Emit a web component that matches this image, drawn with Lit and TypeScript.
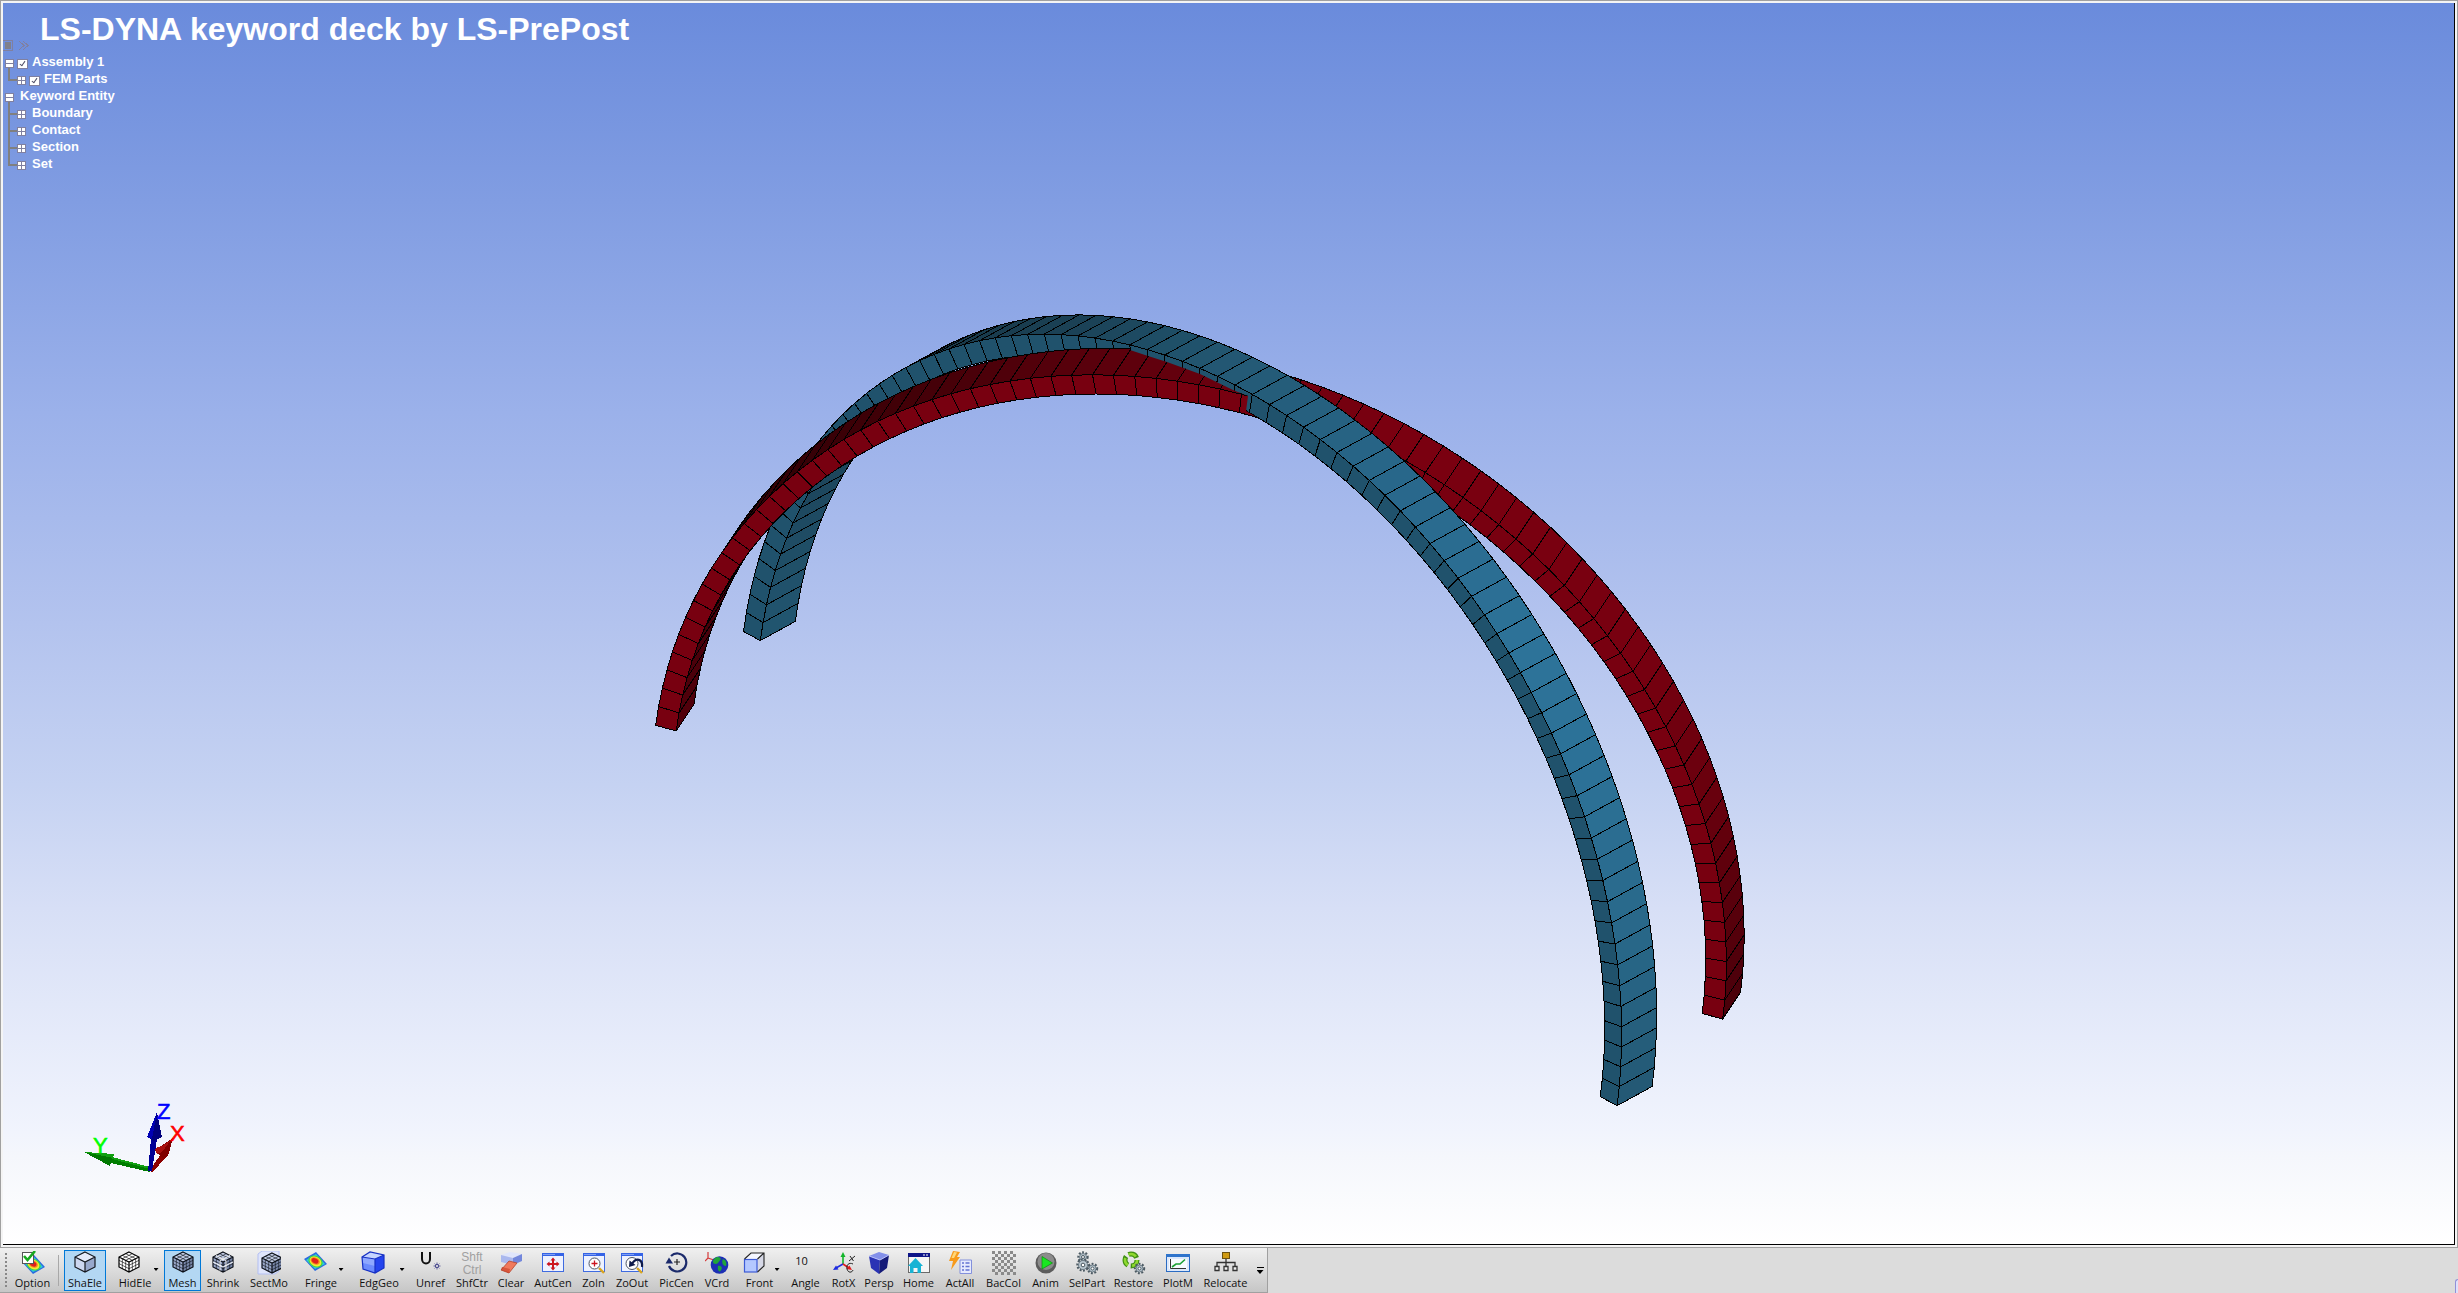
import { LitElement, html, svg, css, nothing, TemplateResult } from "lit";
import { customElement, state } from "lit/decorators.js";
import { classMap } from "lit/directives/class-map.js";
import { styleMap } from "lit/directives/style-map.js";

/* ---------- Arch geometry: half rings of shell elements, orthographic view ---------- */

type Vec = [number, number];
type Key = [number, string];

const STEPS = 79;
const INNER = 0.9615;

interface Arch {
  center: Vec;
  radius: Vec;
  rise: Vec;
  depth: Vec;
  front: string;
  outer: Key[];
  inner: Key[];
}

const BLUE: Arch = {
  center: [1180.3, 868.6],
  radius: [436.8, 237.1],
  rise: [63.3, -479],
  depth: [35, -19.2],
  front: "#20526c",
  outer: [[22, "#183a4b"], [29, "#1b4257"], [33, "#1e4d65"], [38, "#245a76"], [47, "#28678a"], [57, "#2d7399"], [63, "#2c7197"], [71, "#286788"], [79, "#235772"]],
  inner: [[0, "#21556f"], [5, "#1f4c64"], [12, "#1b4156"], [22, "#183a4c"]],
};

const RED: Arch = {
  center: [1189.2, 872.2],
  radius: [533.5, 146.9],
  rise: [62.8, -475.2],
  depth: [17.8, -26.7],
  front: "#780010",
  outer: [[14, "#330005"], [24, "#470008"], [32, "#5c000c"], [38, "#6a000e"], [45, "#7a0010"], [60, "#780010"], [68, "#68000d"], [79, "#48000a"]],
  inner: [[0, "#50000b"], [14, "#350006"]],
};

const channel = (c: string, i: number) => parseInt(c.slice(1 + 2 * i, 3 + 2 * i), 16);

function shade(keys: Key[], t: number): string {
  if (t <= keys[0][0]) return keys[0][1];
  for (let i = 1; i < keys.length; i++) {
    const [t1, c1] = keys[i];
    const [t0, c0] = keys[i - 1];
    if (t <= t1) {
      const f = (t - t0) / (t1 - t0);
      const mix = [0, 1, 2].map((k) => Math.round(channel(c0, k) * (1 - f) + channel(c1, k) * f));
      return `rgb(${mix.join(",")})`;
    }
  }
  return keys[keys.length - 1][1];
}

function point(a: Arch, step: number, scale: number, back: boolean): Vec {
  const th = (Math.PI * step) / STEPS;
  const c = -Math.cos(th) * scale;
  const s = Math.sin(th) * scale;
  const k = back ? 1 : 0;
  return [
    a.center[0] + a.radius[0] * c + a.rise[0] * s + a.depth[0] * k,
    a.center[1] + a.radius[1] * c + a.rise[1] * s + a.depth[1] * k,
  ];
}

function area(p: Vec[]): number {
  return p.reduce((sum, [x, y], i) => {
    const [nx, ny] = p[(i + 1) % p.length];
    return sum + x * ny - nx * y;
  }, 0);
}

function quad(p: Vec[], fill: string) {
  return svg`<polygon points=${p.map(([x, y]) => `${x.toFixed(1)},${y.toFixed(1)}`).join(" ")} fill=${fill}></polygon>`;
}

function archFaces(a: Arch) {
  const inner: TemplateResult<2>[] = [];
  const outer: TemplateResult<2>[] = [];
  const front: TemplateResult<2>[] = [];
  for (let i = 0; i < STEPS; i++) {
    const ring = (scale: number): Vec[] => [
      point(a, i, scale, false), point(a, i + 1, scale, false),
      point(a, i + 1, scale, true), point(a, i, scale, true),
    ];
    const out = ring(1);
    const inn = ring(INNER);
    if (area(inn) > 0) inner.push(quad(inn, shade(a.inner, i)));
    if (area(out) < 0) outer.push(quad(out, shade(a.outer, i)));
    front.push(quad([out[0], out[1], inn[1], inn[0]], a.front));
  }
  return [inner, outer, front];
}

/* ---------- Toolbar icons ---------- */

function cube(top: string, left: string, right: string, line: string, grid = false) {
  const lines: string[] = [];
  if (grid) {
    for (const f of [1 / 3, 2 / 3]) {
      const dx = 10 * f, dy = 5 * f, h = 10 * f;
      lines.push(
        `M${2 + dx} ${6 + dy}L${12 + dx} ${1 + dy}`,
        `M${22 - dx} ${6 + dy}L${12 - dx} ${1 + dy}`,
        `M${2 + dx} ${6 + dy}v10`,
        `M${22 - dx} ${6 + dy}v10`,
        `M2 ${6 + h}L12 ${11 + h}L22 ${6 + h}`
      );
    }
  }
  return svg`
    <path d="M12 1L22 6L12 11L2 6Z" fill=${top}></path>
    <path d="M2 6L12 11V21L2 16Z" fill=${left}></path>
    <path d="M22 6L12 11V21L22 16Z" fill=${right}></path>
    <path d=${lines.join("") || "M0 0"} fill="none" stroke=${line} stroke-width="0.6"></path>
    <path d="M12 1L22 6V16L12 21L2 16V6ZM2 6L12 11L22 6M12 11V21" fill="none" stroke=${line} stroke-width="1.2"></path>`;
}

const fringe = (y: number) => svg`
  <g transform="translate(0 ${y})">
    <path d="M1 8L13 1L24 13L12 20Z" fill="#2a6be0"></path>
    <path d="M3 9L13 3L22 13L12 18Z" fill="#2fd0d8"></path>
    <ellipse cx="12.5" cy="10.5" rx="7.5" ry="5.6" transform="rotate(28 12.5 10.5)" fill="#43d543"></ellipse>
    <ellipse cx="12.5" cy="10.5" rx="6.2" ry="4.6" transform="rotate(28 12.5 10.5)" fill="#f4e932"></ellipse>
    <ellipse cx="12.2" cy="10" rx="4.9" ry="3.5" transform="rotate(28 12.2 10)" fill="#f68a1e"></ellipse>
    <ellipse cx="12" cy="9.8" rx="3.6" ry="2.4" transform="rotate(28 12 9.8)" fill="#e0201c"></ellipse>
  </g>`;

const frame = svg`
  <rect x="1.5" y="2.5" width="21" height="18" fill="#eef2ff" stroke="#3f6be0"></rect>
  <rect x="1" y="2" width="22" height="3" fill="#3563e6"></rect>
  <rect x="2" y="3" width="12" height="1" fill="#7f9ff4"></rect>`;

const handle = svg`<path d="M17 17L22 22" stroke="#d9a520" stroke-width="2.4"></path>`;

function gear(cx: number, cy: number, r: number) {
  return svg`
    <circle cx=${cx} cy=${cy} r=${r} fill="none" stroke="#4c5a63" stroke-width="2.4" stroke-dasharray="1.8 1.5"></circle>
    <circle cx=${cx} cy=${cy} r=${r - 1} fill="#b9c7cf" stroke="#6d7c86"></circle>
    <circle cx=${cx} cy=${cy} r=${r / 3} fill="#ffffff" stroke="#4c5a63"></circle>`;
}

const ICONS: Record<string, TemplateResult<2>> = {
  Option: svg`${fringe(3)}
    <rect x="1.5" y="1.5" width="11" height="11" fill="#ffffff" stroke="#555"></rect>
    <path d="M3 5L6.500 9L14 0" fill="none" stroke="#17a81f" stroke-width="2.6"></path>`,
  ShaEle: cube("#e4eafa", "#cdd7f0", "#98a8cc", "#15181f"),
  HidEle: cube("#ffffff", "#ffffff", "#ffffff", "#000000", true),
  Mesh: cube("#c3cde6", "#9aa8ca", "#7886a8", "#0c1018", true),
  Shrink: svg`${cube("#c3cde6", "#9aa8ca", "#7886a8", "#0c1018", true)}
    <path d="M5 4.500L15 9.500V19.500M19 4.500L9 9.500V19.500M2 11L12 16L22 11" fill="none" stroke="#ffffff" stroke-width="1"></path>`,
  SectMo: svg`
    <path d="M1 3L5 0H22V20L18 23H1Z" fill="#dfe5fb" stroke="#b3bff3"></path>
    <g transform="translate(3 1)">${cube("#c3cde6", "#9aa8ca", "#7886a8", "#0c1018", true)}</g>`,
  Fringe: fringe(0),
  EdgGeo: svg`
    <path d="M1 6L9 1L23 4L14 8Z" fill="#c5d4ff"></path>
    <path d="M1 6L14 8V22L2 18Z" fill="#8ea8ff"></path>
    <path d="M14 8L23 4V17L14 22Z" fill="#2444ee"></path>
    <path d="M2 12L14 15V22L2 18Z" fill="#6b8bfd"></path>
    <path d="M1 6L9 1L23 4V17L14 22L2 18ZM1 6L14 8L23 4M14 8V22" fill="none" stroke="#1630c4" stroke-width="1.2"></path>`,
  Unref: svg`
    <path d="M3 1V8C3 14 11 14 11 8V1" fill="none" stroke="#111" stroke-width="2"></path>
    <g stroke="#44448c" fill="none"><circle cx="18" cy="15" r="1.600"></circle><path d="M18 11.500V13M18 17V18.500M14.500 15H16M20 15H21.500M15.600 12.600L16.600 13.600M19.400 16.400L20.400 17.400M20.400 12.600L19.400 13.600M16.600 16.400L15.600 17.400" stroke-width="0.8"></path></g>`,
  Clear: svg`
    <path d="M2 4L11 1L23 3L14 7Z" fill="#dfe5fb"></path>
    <path d="M2 4L14 7V14L2 11Z" fill="#aab8ee"></path>
    <path d="M14 7L23 3V10L14 14Z" fill="#7387dc"></path>
    <path d="M10 10L18 12L10 22L2 19Z" fill="#f0795c"></path>
    <path d="M2 19L10 22L11 18L3 16Z" fill="#d9553a"></path>
    <path d="M10 10L18 12L10 22L2 19Z" fill="none" stroke="#b4432d" stroke-width="0.8"></path>`,
  AutCen: svg`${frame}
    <path d="M12 8V18M7 13H17" stroke="#cc1420" stroke-width="2"></path>
    <path d="M12 6.500L9.500 9.500H14.500ZM12 19.500L9.500 16.500H14.500ZM5.500 13L8.500 10.500V15.500ZM18.500 13L15.500 10.500V15.500Z" fill="#cc1420"></path>`,
  ZoIn: svg`${frame}${handle}
    <circle cx="12.500" cy="12.500" r="5.500" fill="#ffffff" stroke="#4d5564"></circle>
    <path d="M12.500 9.500V15.500M9.500 12.500H15.500" stroke="#cc1420" stroke-width="1.300"></path>`,
  ZoOut: svg`${frame}${handle}
    <circle cx="12" cy="12.500" r="6" fill="#ffffff" stroke="#4d5564"></circle>
    <path d="M22 16C23 8 16 6 12 13" fill="none" stroke="#0e1a4a" stroke-width="2.200"></path>
    <path d="M9 16L9.500 9.500L15.500 14Z" fill="#0e1a4a"></path>`,
  PicCen: svg`
    <path d="M4 15A9 9 0 1 0 6 5" fill="none" stroke="#1b2a6b" stroke-width="2.200"></path>
    <path d="M0.500 12.500H8L4 6.500Z" fill="#1b2a6b"></path>
    <path d="M12 8V14M9 11H15" stroke="#222" stroke-width="1.200"></path>`,
  VCrd: svg`
    <path d="M3 1V7L9 9M3 7L0 10" fill="none" stroke="#d43a3a" stroke-width="1.200"></path>
    <circle cx="14.500" cy="14" r="8.800" fill="#1c2fb4"></circle>
    <path d="M9 8C12 5 15 6 16 8C14 10 13 13 11 13C8 13 7 11 9 8ZM18 8C21 9 22 12 21 15C18 15 16 11 18 8ZM13 15C16 14 18 17 16 19C15 22 12 20 13 15Z" fill="#1fa53a"></path>`,
  Front: svg`
    <path d="M2 8L9 2H22L15 8Z" fill="#f4f6ff"></path>
    <path d="M15 8L22 2V15L15 21Z" fill="#d6d8e6"></path>
    <rect x="2" y="8" width="13" height="13" fill="#b4c8ff"></rect>
    <rect x="2.500" y="8.500" width="12.500" height="12.500" fill="none" stroke="#3c5bd6" stroke-width="1.200"></rect>
    <path d="M2.500 8L9 2H22V15L15.500 21M15.500 8L22 2" fill="none" stroke="#222" stroke-width="1.100"></path>`,
  RotX: svg`
    <path d="M11 13V4" stroke="#12b52a" stroke-width="1.600"></path><path d="M8.500 6L11 1L13.500 6Z" fill="#12b52a"></path>
    <path d="M11 13L4 17" stroke="#1d2be0" stroke-width="1.600"></path><path d="M1 19L6.500 18.500L4 14.500Z" fill="#1d2be0"></path>
    <path d="M11 13L17 17" stroke="#e01c1c" stroke-width="1.600"></path><path d="M20 19L14.500 18L17.500 14.500Z" fill="#e01c1c"></path>
    <path d="M18 5L21.500 10M23 5L17 10" stroke="#222" stroke-width="1"></path>
    <path d="M21 13C17 11 14 14 15 18C16 22 20 22 21 19" fill="none" stroke="#222" stroke-width="1"></path>`,
  Persp: svg`
    <path d="M2 5L12 1L22 4L13 9Z" fill="#8390ea"></path>
    <path d="M2 5L13 9L12 23L4 17Z" fill="#2a33b4"></path>
    <path d="M13 9L22 4L20 17L12 23Z" fill="#141a78"></path>
    <path d="M2 5L13 9L22 4" fill="none" stroke="#c3caff" stroke-width="0.900"></path>`,
  Home: svg`
    <rect x="1.500" y="2.500" width="21" height="19" fill="#f5f5f5" stroke="#6a6a6a"></rect>
    <rect x="1" y="2" width="22" height="4" fill="#0c1488"></rect>
    <path d="M16 4H18M19 4H21" stroke="#ffffff" stroke-width="1"></path>
    <path d="M1 15L8.500 7L16 15H14V22H10.500V17H6.500V22H3V15Z" fill="#16b3d4"></path>`,
  ActAll: svg`
    <path d="M5 0L12 1L9 6H12L3 19L5 10H1Z" fill="#f79a1c"></path><path d="M6 1L9 1.500L6 7H3.500Z" fill="#ffd87a"></path>
    <path d="M12 9H23.500V22.500H12Z" fill="#e6eafd" stroke="#8390dc"></path>
    <path d="M14 12H16M14 15.500H16M14 19H16M17.500 12H21.500M17.500 15.500H21.500M17.500 19H21.500" stroke="#6473d2" stroke-width="1.400"></path>`,
  BacCol: svg`
    ${Array.from({ length: 64 }, (_, i) => [i % 8, Math.floor(i / 8)])
      .filter(([x, y]) => (x + y) % 2 === 0)
      .map(([x, y]) => svg`<rect x=${x * 3} y=${y * 3} width="3" height="3" fill="#8a8a8a"></rect>`)}`,
  Anim: svg`
    <circle cx="12" cy="12" r="10.500" fill="#5c5c5c"></circle>
    <circle cx="12" cy="10.500" r="8.500" fill="#8b8b8b"></circle>
    <path d="M8 5.500L18.500 12L8 18Z" fill="#19e620" stroke="#0a8c10" stroke-width="0.700"></path>`,
  SelPart: svg`${gear(8, 6, 4.5)}${gear(8, 14, 5.5)}${gear(17.5, 17.5, 4.5)}`,
  Restore: svg`
    <circle cx="9" cy="9" r="6" fill="none" stroke="#3f8f14" stroke-width="5" stroke-dasharray="9.500 3"></circle>
    <circle cx="9" cy="9" r="6" fill="none" stroke="#8fd82f" stroke-width="2.600" stroke-dasharray="8 4.500"></circle>
    ${gear(17.5, 17.5, 4.5)}`,
  PlotM: svg`
    <rect x="0.500" y="3.500" width="23" height="17" fill="#dce8fb" stroke="#2a6bc2"></rect>
    <rect x="0" y="3" width="24" height="3" fill="#2f74cc"></rect>
    <rect x="3" y="8" width="18" height="10" fill="#f7faff"></rect>
    <path d="M4.500 8V17.500H20" fill="none" stroke="#333" stroke-width="1"></path>
    <path d="M6 16L10 13H14L19 8.500" fill="none" stroke="#1aa033" stroke-width="1.600"></path>`,
  Relocate: svg`
    <rect x="8.500" y="1.500" width="7" height="6" fill="#cf9a12" stroke="#6a5010"></rect>
    <path d="M12 8V15M3 15V11.500H21V15" fill="none" stroke="#333" stroke-width="1.300"></path>
    <path d="M1 15.500H5V19.500H1ZM10 15.500H14V19.500H10ZM19 15.500H23V19.500H19Z" fill="#f0f0f0" stroke="#333" stroke-width="1.300"></path>`,
};

interface Tool { name: string; width: number; menu?: boolean; text?: string[] }

const TOOLS: Tool[] = [
  { name: "ShaEle", width: 42 }, { name: "HidEle", width: 56, menu: true }, { name: "Mesh", width: 37 },
  { name: "Shrink", width: 42 }, { name: "SectMo", width: 48 }, { name: "Fringe", width: 54, menu: true },
  { name: "EdgGeo", width: 60, menu: true }, { name: "Unref", width: 41 },
  { name: "ShfCtr", width: 40, text: ["Shft", "Ctrl"] }, { name: "Clear", width: 36 },
  { name: "AutCen", width: 46 }, { name: "ZoIn", width: 33 }, { name: "ZoOut", width: 42 },
  { name: "PicCen", width: 45 }, { name: "VCrd", width: 34 }, { name: "Front", width: 49, menu: true },
  { name: "Angle", width: 41, text: ["10"] }, { name: "RotX", width: 33 }, { name: "Persp", width: 36 },
  { name: "Home", width: 41 }, { name: "ActAll", width: 40 }, { name: "BacCol", width: 45 },
  { name: "Anim", width: 37 }, { name: "SelPart", width: 44 }, { name: "Restore", width: 47 },
  { name: "PlotM", width: 40 }, { name: "Relocate", width: 53 },
];

@customElement("model-view")
class ModelView extends LitElement {
  static styles = css`
    :host { display: block; }
    .scene { display: block; width: 100%; height: 100%; }
    .mesh { stroke: #000; stroke-width: 1; stroke-linejoin: round; shape-rendering: crispEdges; }
  `;

  render() {
    return html`
      <svg class="scene" viewBox="3 3 2451 1241" role="img" aria-label="Two crossing arches">
        <clipPath id="near">
          <path d="M0 0H1130V350L1148 356L1167 362L1200 374L1233 390L1248 396L1246 411L1261 420V1293H0Z"></path>
        </clipPath>
        <g class="mesh">${archFaces(RED)}</g>
        <g class="mesh">${archFaces(BLUE)}</g>
        <g class="mesh" clip-path="url(#near)">${archFaces(RED)}</g>
      </svg>`;
  }
}

@customElement("axis-triad")
class AxisTriad extends LitElement {
  static styles = css`
    :host { display: block; }
    .triad { display: block; width: 100%; height: 100%; shape-rendering: crispEdges; }
    .letter { font: 22px "Liberation Sans", Arial, sans-serif; stroke-width: 0.6; }
  `;

  render() {
    return html`
      <svg class="triad" viewBox="80 1095 112 82" role="img" aria-label="Axes">
        <path d="M149 1171L161 1154L166 1157L153 1172Z" fill="#8c0000"></path>
        <path d="M155 1150L173 1138L168 1156L162 1158Z" fill="#800000"></path>
        <path d="M155 1148L162 1146L171 1140L162 1152L157 1154Z" fill="#a81010"></path>
        <path d="M150 1167V1172L111 1163L112 1157Z" fill="#007d00"></path>
        <path d="M150 1167V1169L112 1159V1157Z" fill="#12a012"></path>
        <path d="M84 1152L114 1154L112 1160L110 1166Z" fill="#007800"></path>
        <path d="M84 1152L114 1154L113 1158Z" fill="#0fa00f"></path>
        <path d="M148 1171L151 1139H157L152 1171Z" fill="#000096"></path>
        <path d="M157 1112L147 1137L154 1141L162 1137Z" fill="#00007d"></path>
        <path d="M157 1112L147 1137L152 1139Z" fill="#0000b4"></path>
        <text class="letter" x="157" y="1119" fill="#0000ff" stroke="#0000ff">Z</text>
        <text class="letter" x="170" y="1141" fill="#ff0000" stroke="#ff0000">X</text>
        <text class="letter" x="93" y="1153" fill="#00ff00" stroke="#00ff00">Y</text>
      </svg>`;
  }
}

interface Node { label: string; child?: boolean; open?: boolean; check?: boolean; last?: boolean }

const NODES: Node[] = [
  { label: "Assembly 1", open: true, check: true },
  { label: "FEM Parts", child: true, check: true, last: true },
  { label: "Keyword Entity", open: true },
  { label: "Boundary", child: true },
  { label: "Contact", child: true },
  { label: "Section", child: true },
  { label: "Set", child: true, last: true },
];

@customElement("entity-tree")
class EntityTree extends LitElement {
  static styles = css`
    :host { display: block; color: #fff; font: bold 13px/17px "Liberation Sans", Arial, sans-serif; }
    button { appearance: none; border: 0; padding: 0; margin: 0; background: none; font: inherit; color: inherit; }
    svg { display: block; shape-rendering: crispEdges; }
    .head { display: flex; align-items: center; gap: 6px; height: 15px; }
    .rows { list-style: none; margin: 0; padding: 0 0 0 2px; }
    .row { display: flex; align-items: center; height: 17px; }
    .toggle, .guide { width: 12px; height: 17px; flex: none; }
    .entry { display: flex; align-items: center; gap: 4px; white-space: nowrap; }
    .plain { padding-left: 3px; white-space: nowrap; }
    .tick { appearance: none; position: relative; box-sizing: border-box; width: 11px; height: 10px; margin: 4px 0 0; background: #fff; border: 1px solid #8080a0; }
    .tick:checked::after { content: ""; position: absolute; left: 3px; top: 0; width: 2px; height: 5px; border: solid #505068; border-width: 0 1px 1px 0; transform: rotate(35deg); }
  `;

  private toggle(n: Node) {
    return html`
      <button class="toggle" aria-label=${(n.open ? "Collapse " : "Expand ") + n.label}>
        <svg width="12" height="17" viewBox="0 0 12 17">
          ${n.open ? svg`<rect x="3" y="15" width="2" height="2" fill="#808080"></rect>` : nothing}
          <rect x="0" y="6" width="9" height="9" fill="#8080a0"></rect>
          <rect x="1" y="7" width="7" height="7" fill="#ffffff"></rect>
          <rect x="0" y="10" width="9" height="1" fill="#8080a0"></rect>
          ${n.open ? nothing : svg`<rect x="4" y="6" width="1" height="9" fill="#8080a0"></rect>`}
        </svg>
      </button>`;
  }

  render() {
    return html`
      <div class="head">
        <button aria-label="Dock tree">
          <svg width="10" height="11" viewBox="0 0 10 11">
            <path d="M0 0.500H9.500V10.500H0" fill="none" stroke="#8080a0"></path><rect x="2" y="2" width="6" height="7" fill="#80808c"></rect>
          </svg>
        </button>
        <button aria-label="Expand all">
          <svg width="10" height="11" viewBox="0 0 10 11">
            <path d="M0 1L5 5.500L0 10M4 1L9 5.500L4 10" fill="none" stroke="#8080a0"></path>
          </svg>
        </button>
      </div>
      <ul class="rows">
        ${NODES.map((n) => html`
          <li class="row">
            ${n.child
              ? html`<svg class="guide" viewBox="0 0 12 17">
                  <rect x="3" y="0" width="2" height=${n.last ? 11 : 17} fill="#808080"></rect>
                  <rect x="3" y="9" width="9" height="2" fill="#808080"></rect>
                </svg>`
              : nothing}
            ${this.toggle(n)}
            ${n.check
              ? html`<label class="entry"><input class="tick" type="checkbox" checked />${n.label}</label>`
              : html`<span class="plain">${n.label}</span>`}
          </li>`)}
      </ul>`;
  }
}

@customElement("view-toolbar")
class ViewToolbar extends LitElement {
  @state() private active = new Set(["ShaEle", "Mesh"]);

  static styles = css`
    :host { display: flex; height: 45px; background: #dcdcdc; font: 11px/14px "Open Sans", "Noto Sans", sans-serif; color: #111; }
    .bar {
      display: flex; align-items: stretch; gap: 1px; box-sizing: border-box; padding: 2px 0 1px 4px;
      background: linear-gradient(#f0f0f0, #dedede 45%, #c6c6c6);
      border-right: 1px solid #a0a0a0; border-bottom: 1px solid #a0a0a0;
    }
    .grip { width: 2px; margin: 3px 1px; background: repeating-linear-gradient(#888 0 2px, transparent 2px 4px); }
    .rule { width: 1px; margin: 5px 4px 5px 1px; background: #a8a8a8; }
    .tool {
      appearance: none; display: grid; grid-template: 25px 14px / minmax(0, 1fr); justify-items: center; align-content: start;
      box-sizing: border-box; border: 1px solid transparent; padding: 0; margin: 0;
      background: none; font: inherit; color: inherit; height: 41px;
    }
    .menu { grid-template-columns: minmax(0, 1fr) 12px; }
    .on { background: #b3d7f3; border-color: #0078d7; }
    .icon { width: 24px; height: 24px; }
    .caption { grid-column: 1 / -1; justify-self: stretch; display: flex; justify-content: center; white-space: nowrap; }
    .arrow { width: 5px; height: 3px; align-self: end; margin-bottom: 5px; background: #000; clip-path: polygon(0 0, 100% 0, 50% 100%); }
    .value { font-size: 11px; line-height: 20px; margin-right: 8px; }
    .keys { display: grid; font: 12px/12px "Liberation Sans", Arial, sans-serif; color: #a0a0a0; text-align: center; }
    .more { appearance: none; border: 0; padding: 0; width: 14px; background: none; display: grid; place-content: center; justify-items: center; gap: 2px; }
    .dash { width: 7px; height: 1px; background: #000; }
    .down { width: 7px; height: 4px; background: #000; clip-path: polygon(0 0, 100% 0, 50% 100%); }
    .dock { flex: 1; display: flex; justify-content: flex-end; align-items: flex-end; }
    .tab { width: 3px; height: 14px; box-sizing: border-box; border: solid #9090d8; border-width: 1px 0 0 1px; border-top-left-radius: 3px; background: #dfe0fa; }
  `;

  private flip(name: string) {
    const next = new Set(this.active);
    next.has(name) ? next.delete(name) : next.add(name);
    this.active = next;
  }

  private face(t: Tool) {
    if (!t.text) return html`<svg class="icon" viewBox="0 0 24 24" aria-hidden="true">${ICONS[t.name]}</svg>`;
    return t.text.length > 1
      ? html`<span class="keys">${t.text.map((k) => html`<span>${k}</span>`)}</span>`
      : html`<span class="value">${t.text[0]}</span>`;
  }

  private tool(t: Tool) {
    return html`
      <button
        class=${classMap({ tool: true, menu: !!t.menu, on: this.active.has(t.name) })}
        style=${styleMap({ width: `${t.width}px` })}
        @click=${() => this.flip(t.name)}
      >
        ${this.face(t)}${t.menu ? html`<span class="arrow"></span>` : nothing}
        <span class="caption">${t.name}</span>
      </button>`;
  }

  render() {
    return html`
      <div class="bar" role="toolbar" aria-label="View tools">
        <span class="grip"></span>
        ${this.tool({ name: "Option", width: 47 })}
        <span class="rule"></span>
        ${TOOLS.map((t) => this.tool(t))}
        <button class="more" aria-label="More tools"><span class="dash"></span><span class="down"></span></button>
      </div>
      <div class="dock"><span class="tab"></span></div>`;
  }
}

@customElement("app-root")
class AppRoot extends LitElement {
  static styles = css`
    :host { display: flex; flex-direction: column; min-height: 100vh; background: #dcdcdc; }
    .panel {
      flex: 1; display: flex; background: #f4f4f4; padding: 2px;
      border: 1px solid #a0a0a0;
    }
    .view {
      position: relative; flex: 1; display: flex; flex-direction: column; align-items: flex-start;
      border: solid #000; border-width: 0 1px 1px 0;
      background: linear-gradient(#6a8bdc, #819de2 16%, #9bb1ea 33%, #b3c3ee 50%, #c5d2f2 63%, #d7dff6 73%, #f1f4fd 91%, #f5f7fc 93%, #ffffff);
    }
    .model { position: absolute; inset: 0; }
    .triad { position: absolute; left: 77px; bottom: 67px; width: 112px; height: 82px; }
    .title {
      position: relative; margin: 8px 0 -9px; padding-left: 37px; white-space: nowrap; color: #fff;
      font: bold 32px/36px "Liberation Sans", Arial, sans-serif;
    }
    .tree { position: relative; }
  `;

  render() {
    return html`
      <main class="panel">
        <section class="view">
          <model-view class="model"></model-view>
          <axis-triad class="triad"></axis-triad>
          <h1 class="title">LS-DYNA keyword deck by LS-PrePost</h1>
          <entity-tree class="tree"></entity-tree>
        </section>
      </main>
      <view-toolbar></view-toolbar>`;
  }
}
